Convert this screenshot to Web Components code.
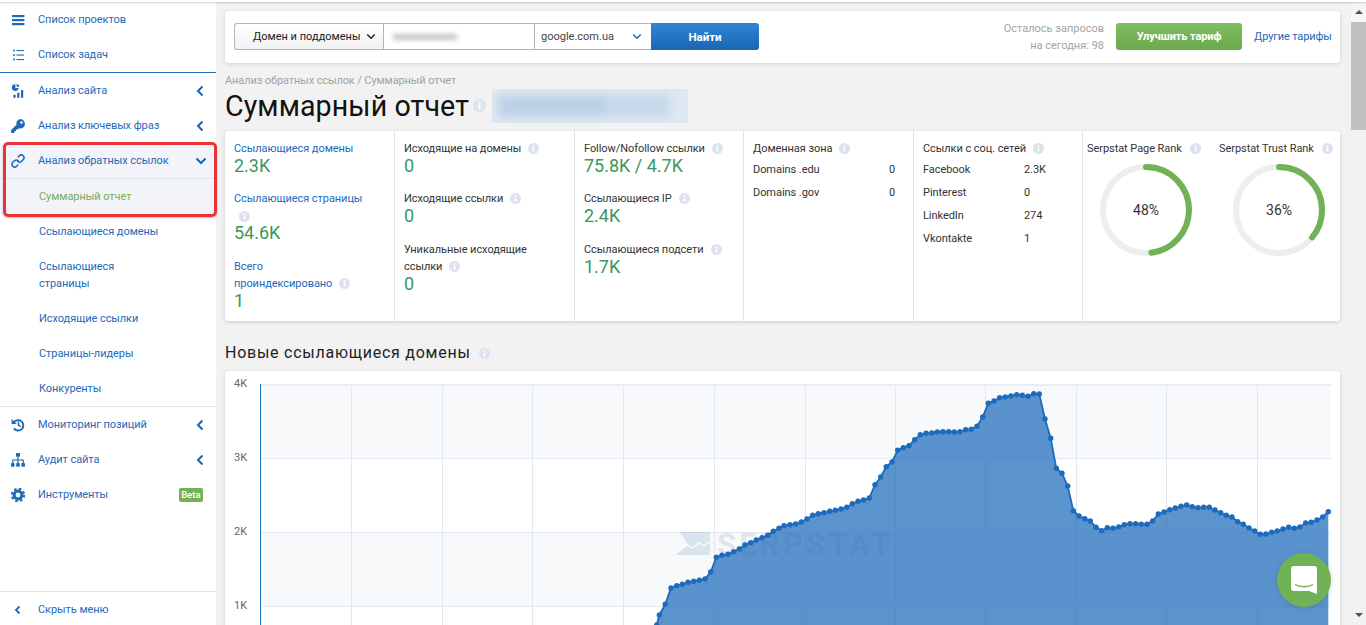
<!DOCTYPE html>
<html lang="ru">
<head>
<meta charset="utf-8">
<title>Суммарный отчет</title>
<style>
    html, body { margin: 0; height: 100%; overflow: hidden; background: #f2f2f2; }
    body { font-family: Roboto, "Liberation Sans", sans-serif; font-size: 11px; color: #333; }
    app-shell { height: 625px; }
</style>
</head>
<body>
<app-shell>
    <side-menu slot="menu">
        <nav-item icon="bars">Список проектов</nav-item>
        <nav-item icon="list" divider="blue">Список задач</nav-item>
        <nav-item icon="chart" arrow="left">Анализ сайта</nav-item>
        <nav-item icon="key" arrow="left">Анализ ключевых фраз</nav-item>
        <nav-group>
            <nav-item icon="link" arrow="down" active divider="pale">Анализ обратных ссылок</nav-item>
            <sub-item current>Суммарный отчет</sub-item>
        </nav-group>
        <sub-item>Ссылающиеся домены</sub-item>
        <sub-item>Ссылающиеся<br>страницы</sub-item>
        <sub-item>Исходящие ссылки</sub-item>
        <sub-item>Страницы-лидеры</sub-item>
        <sub-item divider="pale">Конкуренты</sub-item>
        <nav-item icon="history" arrow="left">Мониторинг позиций</nav-item>
        <nav-item icon="sitemap" arrow="left">Аудит сайта</nav-item>
        <nav-item icon="cog" badge="Beta">Инструменты</nav-item>
        <nav-item slot="footer" icon="back">Скрыть меню</nav-item>
    </side-menu>

    <search-card></search-card>
    <page-title></page-title>

    <stat-panel>
        <stat-col style="width:170px">
            <stat-block link value="2.3K">Ссылающиеся домены</stat-block>
            <stat-block link value="54.6K" info="below">Ссылающиеся страницы</stat-block>
            <stat-block link value="1" info>Всего<br>проиндексировано</stat-block>
        </stat-col>
        <stat-col style="width:180px">
            <stat-block value="0" info>Исходящие на домены</stat-block>
            <stat-block value="0" info>Исходящие ссылки</stat-block>
            <stat-block value="0" info>Уникальные исходящие<br>ссылки</stat-block>
        </stat-col>
        <stat-col style="width:169px">
            <stat-block value="75.8K / 4.7K" info>Follow/Nofollow ссылки</stat-block>
            <stat-block value="2.4K" info>Ссылающиеся IP</stat-block>
            <stat-block value="1.7K" info>Ссылающиеся подсети</stat-block>
        </stat-col>
        <stat-col style="width:170px">
            <stat-table heading="Доменная зона" cols="1fr auto" rows="Domains .edu:0;Domains .gov:0"></stat-table>
        </stat-col>
        <stat-col style="width:169px">
            <stat-table heading="Ссылки с соц. сетей" cols="101px auto" rows="Facebook:2.3K;Pinterest:0;LinkedIn:274;Vkontakte:1"></stat-table>
        </stat-col>
        <rank-gauge label="Serpstat Page Rank" percent="48"></rank-gauge>
        <rank-gauge label="Serpstat Trust Rank" percent="36" style="--ring-left:14px"></rank-gauge>
    </stat-panel>

    <section-title>Новые ссылающиеся домены</section-title>
    <area-chart></area-chart>

    <chat-launcher slot="overlay"></chat-launcher>
</app-shell>

<script>
const FONT = 'Roboto, "Liberation Sans", sans-serif';
const LINK = '#1e69b8';
const GREEN = '#72b256';

// menu icons, all on a 16x16 box
const ICONS = {
    bars: '<rect x="2" y="3" width="12.4" height="2.2"/><rect x="2" y="7" width="12.4" height="2.2"/><rect x="2" y="11" width="12.4" height="2.2"/>',
    list: '<circle cx="4" cy="3.5" r="1"/><circle cx="4" cy="8" r="1"/><circle cx="4" cy="12.5" r="1"/><rect x="6.5" y="3" width="7.5" height="1.1"/><rect x="6.5" y="7.5" width="7.5" height="1.1"/><rect x="6.5" y="12" width="7.5" height="1.1"/>',
    chart: '<path d="M5.4 1.2A3.4 3.4 0 1 0 8.6 5H5.4z"/><path d="M6.6 1v2.8h2.8A3 3 0 0 0 6.6 1z"/><rect x="3.4" y="11.8" width="2.2" height="3" rx=".4"/><rect x="7.2" y="9.8" width="2.2" height="5" rx=".4"/><rect x="11" y="7" width="2.2" height="7.8" rx=".4"/>',
    key: '<path fill-rule="evenodd" d="M10.3 1a4.7 4.7 0 1 1-1.4 9.2L7.6 11.5H6v1.7H4.3v1.7H1.2v-3l5.2-5.2A4.7 4.7 0 0 1 10.3 1zm1.2 2.2a1.3 1.3 0 1 0 0 2.6 1.3 1.3 0 0 0 0-2.6z"/>',
    link: '<g fill="none" stroke="currentColor" stroke-width="1.5" stroke-linecap="round" transform="rotate(-45 8 8)"><path d="M8.4 8A2.7 2.7 0 0 0 5.7 5.3H3.4a2.7 2.7 0 0 0 0 5.4H5"/><path d="M7.6 8a2.7 2.7 0 0 0 2.7 2.7h2.3a2.7 2.7 0 0 0 0-5.4H11"/></g>',
    history: '<path d="M1.6 2v5h5z"/><path fill="none" stroke="currentColor" stroke-width="1.9" d="M3.5 6a5.2 5.2 0 1 1 .4 5.4"/><path fill="none" stroke="currentColor" stroke-width="1.5" d="M8.4 4.6v3.6l2.2 1.4"/>',
    sitemap: '<rect x="6" y="1" width="4" height="3.8" rx=".8"/><rect x="1" y="11" width="3.6" height="3.8" rx=".8"/><rect x="6.2" y="11" width="3.6" height="3.8" rx=".8"/><rect x="11.4" y="11" width="3.6" height="3.8" rx=".8"/><path fill="none" stroke="currentColor" stroke-width="1.2" d="M8 4.8V11M2.8 11V8h10.4v3"/>',
    cog: '<circle cx="8" cy="8" r="3.9" fill="none" stroke="currentColor" stroke-width="3"/><circle cx="8" cy="8" r="6.2" fill="none" stroke="currentColor" stroke-width="2" stroke-dasharray="2.6 2.27"/>',
    back: '<path fill="none" stroke="currentColor" stroke-width="1.8" d="M9.5 4.5 6 8l3.5 3.5"/>'
};

function define(name, css, html, init) {
    customElements.define(name, class extends HTMLElement {
        connectedCallback() {
            if (this.shadowRoot) return;
            this.attachShadow({ mode: 'open' });
            const body = typeof html === 'function' ? html(this) : html;
            this.shadowRoot.innerHTML = `<style>${css}</style>${body}`;
            if (init) init(this);
        }
    });
}

define('app-shell', `
    :host { display: flex; flex-direction: column; position: relative; overflow: hidden; }
    .strip { height: 2px; flex: none; background: #fff; box-shadow: 0 1px 2px rgba(0,0,0,.2); position: relative; z-index: 3; }
    .row { flex: 1; display: flex; min-height: 0; }
    main { flex: 1; min-width: 0; padding: 9px 9px 0; overflow: hidden; }
    .scroll { width: 17px; flex: none; background: #f1f1f1; display: flex; flex-direction: column; align-items: flex-end; }
    .up, .down { width: 15px; height: 20px; display: flex; align-items: center; justify-content: center; background: #f6f6f6; }
    .up::before { content: ""; border: 4px solid transparent; border-top: 0; border-bottom: 4px solid #505050; }
    .down { margin-top: auto; background: #f1f1f1; }
    .down::before { content: ""; border: 4px solid transparent; border-bottom: 0; border-top: 4px solid #505050; }
    .thumb { width: 15px; height: 108px; background: #c1c1c1; }
`, `
    <div class="strip"></div>
    <div class="row">
        <slot name="menu"></slot>
        <main><slot></slot></main>
        <div class="scroll"><div class="up"></div><div class="thumb"></div><div class="down"></div></div>
    </div>
    <slot name="overlay"></slot>
`);

define('side-menu', `
    :host { display: flex; flex-direction: column; width: 216px; flex: none; background: #fff; position: relative; z-index: 2; }
    .list { flex: 1; }
    .foot { border-top: 1px solid #dfe3f1; margin-bottom: -2px; }
`, `
    <div class="list"><slot></slot></div>
    <div class="foot"><slot name="footer"></slot></div>
`);

define('nav-group', `
    :host { display: block; position: relative; background: #f3f4f9; }
    .mark { position: absolute; left: 3px; right: -1px; top: -1px; bottom: -3px; border: 3px solid #ee3338; border-radius: 5px; box-shadow: 0 1px 2px rgba(0,0,0,.25); pointer-events: none; }
`, `<slot></slot><div class="mark"></div>`);

define('nav-item', `
    :host { display: block; color: ${LINK}; }
    .row { display: flex; align-items: center; height: 35px; padding: 0 12px 0 10px; box-sizing: border-box; font: 11px/17px ${FONT}; letter-spacing: -.06px; }
    svg.icon { width: 16px; height: 16px; flex: none; margin-right: 12px; fill: currentColor; }
    .label { flex: 1; white-space: nowrap; }
    svg.arrow { width: 8px; height: 12px; flex: none; margin-right: 0; }
    svg.down { width: 12px; height: 8px; margin-right: -3px; }
    .badge { background: ${GREEN}; color: #fff; font: 500 9.5px/14px ${FONT}; letter-spacing: 0; padding: 0 2.5px; margin-right: 1px; border-radius: 2px; }
    .blue { border-bottom: 1px solid #1e6fc0; }
    .pale { border-bottom: 1px solid #dfe3f1; }
`, el => {
    const name = el.getAttribute('icon');
    const arrow = el.getAttribute('arrow');
    const badge = el.getAttribute('badge');
    let tail = '';
    if (arrow === 'left') tail = '<svg class="arrow" viewBox="0 0 8 12"><path d="M6.5 1.5 2 6l4.5 4.5" fill="none" stroke="#1565b0" stroke-width="2"/></svg>';
    if (arrow === 'down') tail = '<svg class="arrow down" viewBox="0 0 12 8"><path d="M1.5 1.5 6 6l4.5-4.5" fill="none" stroke="#1565b0" stroke-width="2"/></svg>';
    if (badge) tail = `<span class="badge">${badge}</span>`;
    return `<div class="${el.getAttribute('divider') || ''}"><div class="row">
        <svg class="icon" viewBox="0 0 16 16">${ICONS[name]}</svg>
        <span class="label"><slot></slot></span>${tail}
    </div></div>`;
});

define('sub-item', `
    :host { display: block; padding: 9px 10px 9px 39px; font: 11px/17px ${FONT}; letter-spacing: -.06px; color: ${LINK}; }
    :host([current]) { color: #74ad58; }
    :host([divider]) { border-bottom: 1px solid #dfe3f1; }
`, `<slot></slot>`);

define('info-dot', `
    :host { display: inline-block; width: 11px; height: 11px; vertical-align: -2px; margin-left: 7px; }
    svg { display: block; width: 100%; height: 100%; }
`, `<svg viewBox="0 0 11 11"><circle cx="5.5" cy="5.5" r="5.5" fill="#dde2ef"/><rect x="4.7" y="4.6" width="1.6" height="4" fill="#fff"/><circle cx="5.5" cy="3" r=".95" fill="#fff"/></svg>`);

define('search-card', `
    :host { display: flex; align-items: center; box-sizing: border-box; height: 52px; padding: 0 9px 1px; background: #fff; border-radius: 3px; box-shadow: 0 1px 4px rgba(0,0,0,.14); font: 11px ${FONT}; }
    .group { display: flex; height: 27px; white-space: nowrap; }
    .group > div { box-sizing: border-box; display: flex; align-items: center; border: 1px solid #b4b4b4; border-right: 0; height: 27px; }
    .kind { width: 149px; padding: 0 7px 0 18px; justify-content: space-between; border-radius: 3px 0 0 3px; background: linear-gradient(#fff, #f1f1f1); color: #222; }
    .query { width: 151px; padding-left: 9px; }
    .query i { display: block; width: 64px; height: 6px; background: #c3c5c8; filter: blur(2.5px); }
    .engine { width: 117px; padding: 0 9px 0 6px; justify-content: space-between; color: #444; }
    .go { width: 108px; height: 27px; border: 0; padding: 0; border-radius: 0 3px 3px 0; background: linear-gradient(#2f86d8, #1a66b2); color: #fff; font: 700 11.5px ${FONT}; }
    .left { flex: 1; text-align: right; margin-right: 12px; color: #a3a3a3; line-height: 17px; }
    .up { width: 126px; height: 27px; border: 0; padding: 0; border-radius: 3px; background: linear-gradient(#7fbe60, #6ca84f); color: #fff; font: 700 11px ${FONT}; letter-spacing: -.1px; }
    a { margin-left: 12px; width: 77px; color: ${LINK}; text-decoration: none; white-space: nowrap; letter-spacing: -.13px; }
    svg { width: 10px; height: 7px; }
`, `
    <div class="group">
        <div class="kind"><span>Домен и поддомены</span><svg viewBox="0 0 12 8"><path d="M1.5 1.5 6 6l4.5-4.5" fill="none" stroke="#222" stroke-width="1.8"/></svg></div>
        <div class="query"><i></i></div>
        <div class="engine"><span>google.com.ua</span><svg viewBox="0 0 12 8"><path d="M1.5 1.5 6 6l4.5-4.5" fill="none" stroke="#1e69b8" stroke-width="1.8"/></svg></div>
    </div>
    <button class="go">Найти</button>
    <div class="left">Осталось запросов<br>на сегодня: 98</div>
    <button class="up">Улучшить тариф</button>
    <a>Другие тарифы</a>
`);

define('page-title', `
    :host { display: block; box-sizing: border-box; padding-top: 11px; height: 68px; font-family: ${FONT}; }
    .crumb { font-size: 11px; line-height: 14px; color: #a2a2a2; letter-spacing: -.1px; }
    .line { display: flex; align-items: center; height: 35px; }
    h1 { margin: 0; font-size: 28.6px; font-weight: 400; color: #111; letter-spacing: .1px; white-space: nowrap; }
    info-dot { margin-left: 4px; width: 13px; height: 13px; }
    .hidden { width: 196px; height: 34px; margin-left: 6px; background: #dfe8f2; position: relative; overflow: hidden; flex: none; }
    .hidden i { position: absolute; top: 6px; height: 22px; background: #bcd1e7; filter: blur(5px); }
`, `
    <div class="crumb">Анализ обратных ссылок / Суммарный отчет</div>
    <div class="line">
        <h1>Суммарный отчет</h1><info-dot></info-dot>
        <div class="hidden"><i style="left:6px;width:112px"></i><i style="left:118px;width:60px;opacity:.7"></i></div>
    </div>
`);

define('stat-panel', `
    :host { display: flex; height: 190px; background: #fff; border-radius: 3px; box-shadow: 0 1px 4px rgba(0,0,0,.16); overflow: hidden; font: 11px/17px ${FONT}; letter-spacing: -.06px; }
`, `<slot></slot>`);

define('stat-col', `
    :host { display: block; flex: none; box-sizing: border-box; padding: 9px 8px 0 9px; border-right: 1px solid #e0e3ea; }
`, `<slot></slot>`);

define('stat-block', `
    :host { display: block; margin-bottom: 14.4px; color: #333; }
    :host([link]) { color: ${LINK}; }
    .below { display: block; height: 17px; padding-top: 4px; box-sizing: border-box; }
    .below info-dot { margin-left: 5px; vertical-align: top; }
    .value { font-size: 18px; line-height: 20px; margin-top: -1px; color: #3c9660; letter-spacing: 0; white-space: nowrap; }
`, el => {
    const info = el.getAttribute('info');
    const dot = info === 'below' ? '<span class="below"><info-dot></info-dot></span>' : info !== null ? '<info-dot></info-dot>' : '';
    return `<div><slot></slot>${dot}</div><div class="value">${el.getAttribute('value')}</div>`;
});

define('stat-table', `
    :host { display: block; color: #333; }
    .grid { display: grid; margin-top: 1px; padding-right: 10px; }
    .grid span { line-height: 23px; }
`, el => {
    const cells = el.getAttribute('rows').split(';').map(row => row.split(':').map(t => `<span>${t}</span>`).join('')).join('');
    return `<div>${el.getAttribute('heading')}<info-dot></info-dot></div>
        <div class="grid" style="grid-template-columns:${el.getAttribute('cols')}">${cells}</div>`;
});

define('rank-gauge', `
    :host { display: block; flex: none; width: 132px; box-sizing: border-box; padding: 9px 0 0 4px; color: #333; white-space: nowrap; }
    .ring { position: relative; width: 92px; height: 92px; margin: 7px 0 0 var(--ring-left, 13px); }
    svg { display: block; width: 92px; height: 92px; }
    .pct { position: absolute; inset: 1px 0 0; display: flex; align-items: center; justify-content: center; font-size: 14px; color: #333; }
`, el => {
    const p = el.getAttribute('percent');
    return `<div>${el.getAttribute('label')}<info-dot style="margin-left:8px"></info-dot></div>
        <div class="ring">
            <svg viewBox="0 0 92 92">
                <circle cx="46" cy="46" r="43" fill="none" stroke="#eeeeee" stroke-width="6"/>
                <circle cx="46" cy="46" r="43" fill="none" stroke="${GREEN}" stroke-width="6" stroke-linecap="round" pathLength="100" stroke-dasharray="${p} 100" transform="rotate(-90 46 46)"/>
            </svg>
            <div class="pct">${p}%</div>
        </div>`;
});

define('section-title', `
    :host { display: block; margin: 22px 0 8px; height: 20px; font: 16px/20px ${FONT}; letter-spacing: .75px; color: #222; }
    info-dot { margin-left: 8px; vertical-align: -1px; }
`, `<slot></slot><info-dot></info-dot>`);

// points read off the reference, in page coordinates
const CURVE = '656.7,625 659.3,615 665.3,604.3 671,588 676.7,585.7 682.3,584.3 688,582.3 693.7,581.3 699.3,580.3 705,579 710.7,572 716.3,557.3 722,555.3 728,554.3 733.7,551.7 739.3,549 745,545 750.7,542.7 756.3,540 762,537.7 767.7,535.3 773.3,531.3 779,528.3 784,525.7 790,524.7 795.7,524 801.3,522 807,519 812.7,515.3 818.3,513.7 824,512.7 829.7,511.3 835.3,510.3 841,509 846.7,507.3 852.3,503.7 858,501.3 863.5,500 869.3,498 875,484.7 880.7,477 886.3,466.7 892,462 897.7,450.3 903.3,447.7 909,445.7 914.7,439.7 920.3,434.7 926,433.3 931.7,433 937.3,432 943,431.7 948.7,431.7 954.3,432 960,431.7 965.7,429.7 971.3,429.3 977,426.3 982.7,417 988.3,403.3 994,401 999.7,397.7 1005.3,397 1011,396 1016.7,394.7 1022.3,395.3 1028,396.3 1033.7,393.7 1039.3,394 1045,419 1050.7,438.3 1056.3,468.3 1062,473.3 1067.7,486 1073.3,510.7 1079,516 1084.7,518.7 1090.3,521 1096,527.3 1101.7,530.7 1107.3,527.7 1113,528.3 1118.7,527 1124.3,524.7 1130,523.7 1135.7,523.7 1141.3,524.3 1147,524.3 1152.7,521 1158.3,514 1164,512 1169.7,509.7 1175.3,508 1181,506.3 1186.7,505 1192.3,506.7 1198,507.7 1203.7,507.3 1209.3,507.3 1215,510 1220.7,512.7 1226.3,515.3 1232,517 1237.7,521.7 1243.3,524.3 1249,528 1254.7,531 1260.3,534.3 1266,534 1271.7,532.3 1277.3,531 1283,529 1288.7,527.3 1294.3,528.3 1300,527 1305.7,523 1311.3,522.3 1317,520 1322.7,517 1328.3,511.7';
const V_LINES = [351.5, 442.5, 532.5, 623.5, 714.5, 805.5, 895.5, 985.5, 1076.5, 1166.5, 1257.5];
const H_LINES = [458.5, 532.5, 606.5];

define('area-chart', `
    :host { display: block; height: 300px; background: #fff; border-radius: 3px; box-shadow: 0 1px 4px rgba(0,0,0,.14); overflow: hidden; }
    svg { display: block; }
    text { font-family: ${FONT}; }
`, () => {
    const pts = CURVE.split(' ').map(p => p.split(',').map(Number));
    const bottom = 671;
    const line = pts.map(p => p.join(',')).join(' ');
    const bands = [[384, 458], [532, 606]].map(([a, b]) => `<rect x="261" y="${a}" width="1070" height="${b - a}" fill="#f8f9fb"/>`).join('');
    const grid = V_LINES.map(x => `<path d="M${x} 384V${bottom}"/>`).join('') +
        H_LINES.map(y => `<path d="M261 ${y}H1331"/>`).join('');
    const labels = [['4K', 387], ['3K', 461], ['2K', 535], ['1K', 609]].map(([t, y]) =>
        `<text x="234" y="${y}" font-size="11" fill="#666">${t}</text>`).join('');
    const dots = pts.map(([x, y]) => `<circle cx="${x}" cy="${y}" r="2.7"/>`).join('');
    return `<svg width="1115" height="300" viewBox="225 371 1115 300">
        ${bands}
        <g stroke="#e3e6f3" fill="none">${grid}</g>
        <rect x="261" y="384" width="1070" height="2" fill="#e9ecf5"/>
        <path d="M260.5 384V${bottom}" stroke="#1b72c4"/>
        ${labels}
        <polygon points="${line} 1328.3,${bottom} 656.7,${bottom}" fill="#1868b8" fill-opacity=".71"/>
        <polyline points="${line}" fill="none" stroke="#1c6bbd" stroke-width="1.8"/>
        <g fill="#1c6bbd">${dots}</g>
        <g fill="#2e6aa8" fill-opacity=".15">
            <path d="M686 532h24v23h-35l13-10-8-13z"/>
            <text x="717" y="555" font-size="31" font-weight="700" letter-spacing="3.1">SERPSTAT</text>
        </g>
        <path d="M678 551l9-6 5 3 7-5 5 3 5-4" fill="none" stroke="#fff" stroke-opacity=".9" stroke-width="1.4"/>
    </svg>`;
});

define('chat-launcher', `
    :host { position: absolute; left: 1277px; top: 553px; width: 54px; height: 54px; border-radius: 50%; background: ${GREEN}; box-shadow: 0 1px 6px rgba(0,0,0,.12); display: flex; align-items: center; justify-content: center; }
    svg { width: 26px; height: 28px; display: block; }
`, `<svg viewBox="0 0 26 28"><path d="M3 0h20a3 3 0 0 1 3 3v25l-8-3H3a3 3 0 0 1-3-3V3a3 3 0 0 1 3-3z" fill="#fff"/><path d="M4 18.5c5 3 13 3 18 0" fill="none" stroke="${GREEN}" stroke-width="1.3"/></svg>`);
</script>
</body>
</html>
